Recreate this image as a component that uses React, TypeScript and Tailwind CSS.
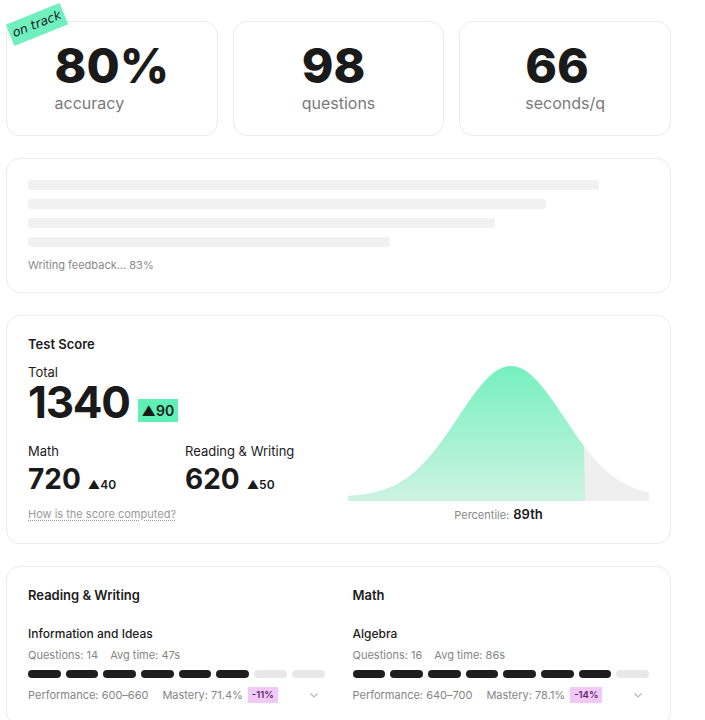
import React from "react";

const font = { fontFamily: "Inter, 'Noto Sans', sans-serif" };

function Stat({ value, label, sticker }: { value: string; label: string; sticker?: boolean }) {
  return (
    <div className="relative flex h-[115px] items-center justify-center rounded-[14px] border border-[#ebebeb] bg-white">
      {sticker && (
        <div className="absolute left-[1px] top-[-9px] flex h-[23px] w-[58px] -rotate-[22deg] items-center justify-center bg-[#6ff0be]">
          <span className="text-[12.5px] italic leading-none text-[#1a1a1a]" style={{ fontFamily: "'DejaVu Sans', sans-serif" }}>
            on track
          </span>
        </div>
      )}
      <div className="mt-[-2px] flex flex-col items-start">
        <div className="text-[48px] font-extrabold leading-[48px] text-[#1a1a1a]">{value}</div>
        <div className="mt-[3px] text-[16px] leading-[20px] text-[#7a7a7a]">{label}</div>
      </div>
    </div>
  );
}

function Bell() {
  const W = 301;
  const H = 135;
  const cx = 163;
  const s2 = 2 * 2822;
  const y = (x: number) => H - (131 * Math.exp(-((x - cx) * (x - cx)) / s2) + 4);
  const cut = 236;
  let green = `M0 ${H}`;
  for (let x = 0; x <= cut; x += 2) green += ` L${x} ${y(x).toFixed(2)}`;
  green += ` L${cut + 1} ${H} Z`;
  let gray = `M${cut} ${H} L${cut} ${y(cut).toFixed(2)}`;
  for (let x = cut; x <= W; x += 2) gray += ` L${x} ${y(x).toFixed(2)}`;
  gray += ` L${W} ${y(W).toFixed(2)} L${W} ${H} Z`;
  return (
    <svg width={W} height={H} viewBox={`0 0 ${W} ${H}`} className="block">
      <defs>
        <linearGradient id="g" x1="0" y1="0" x2="0" y2="1">
          <stop offset="0" stopColor="#76f0bf" />
          <stop offset="1" stopColor="#cdf3e2" />
        </linearGradient>
      </defs>
      <path d={gray} fill="#efefef" />
      <path d={green} fill="url(#g)" />
    </svg>
  );
}

function Bars({ filled }: { filled: number }) {
  return (
    <div className="mt-[8px] flex gap-[5px]">
      {Array.from({ length: 8 }).map((_, i) => (
        <div key={i} className={`h-[8px] flex-1 rounded-full ${i < filled ? "bg-[#1e1e1e]" : "bg-[#e8e8e8]"}`} />
      ))}
    </div>
  );
}

function Chevron() {
  return (
    <svg width="10" height="10" viewBox="0 0 10 10" className="ml-auto mr-[6px]">
      <path d="M1.5 3.5 L5 7 L8.5 3.5" fill="none" stroke="#b5b5b5" strokeWidth="1.1" />
    </svg>
  );
}

function Section({
  title,
  sub,
  q,
  t,
  filled,
  perf,
  mastery,
  delta,
}: {
  title: string;
  sub: string;
  q: string;
  t: string;
  filled: number;
  perf: string;
  mastery: string;
  delta: string;
}) {
  return (
    <div className="flex flex-col">
      <div className="text-[13px] font-semibold leading-[16px] text-[#1c1c1c]">{title}</div>
      <div className="mt-[23px] text-[12px] font-medium leading-[16px] text-[#1c1c1c]">{sub}</div>
      <div className="mt-[6px] flex gap-[12px] text-[11px] leading-[14px] text-[#858585]">
        <span>Questions: {q}</span>
        <span>Avg time: {t}</span>
      </div>
      <Bars filled={filled} />
      <div className="mt-[9px] flex items-center text-[11px] leading-[16px] text-[#858585]">
        <span>Performance: {perf}</span>
        <span className="ml-[14px]">Mastery: {mastery}</span>
        <span className="ml-[5px] bg-[#f2c8f8] px-[4px] text-[9.5px] font-semibold leading-[16px] text-[#5a2a66]">{delta}</span>
        <Chevron />
      </div>
    </div>
  );
}

export default function App() {
  return (
    <div className="min-h-[720px] bg-white" style={font}>
      <div className="ml-[6px] flex w-[665px] flex-col gap-[22px] pt-[21px] pb-[40px]">
        <div className="grid grid-cols-3 gap-[15px]">
          <Stat value="80%" label="accuracy" sticker />
          <Stat value="98" label="questions" />
          <Stat value="66" label="seconds/q" />
        </div>

        <div className="rounded-[14px] border border-[#ebebeb] bg-white px-[21px] pb-[20px] pt-[21px]">
          <div className="flex flex-col gap-[9px]">
            <div className="h-[10px] w-[92%] rounded-[3px] bg-[#f1f1f1]" />
            <div className="h-[10px] w-[83.4%] rounded-[3px] bg-[#f1f1f1]" />
            <div className="h-[10px] w-[75.2%] rounded-[3px] bg-[#f1f1f1]" />
            <div className="h-[10px] w-[58.3%] rounded-[3px] bg-[#f1f1f1]" />
          </div>
          <div className="mt-[11px] text-[11px] leading-[14px] text-[#8a8a8a]">Writing feedback... 83%</div>
        </div>

        <div className="flex rounded-[14px] border border-[#ebebeb] bg-white px-[21px] pb-[21px] pt-[20px]">
          <div className="flex flex-1 flex-col">
            <div className="text-[13px] font-semibold leading-[16px] text-[#1c1c1c]">Test Score</div>
            <div className="mt-[12px] text-[13px] leading-[16px] text-[#1c1c1c]">Total</div>
            <div className="flex items-end gap-[8px]">
              <div className="text-[44px] font-bold leading-[44px] tracking-[-0.03em] text-[#1a1a1a]">1340</div>
              <div className="mb-[2px] flex h-[23px] items-center bg-[#5ef0b5] px-[4px] text-[14px] font-semibold text-[#1a1a1a]">▲90</div>
            </div>
            <div className="mt-[19px] flex">
              <div className="flex w-[157px] flex-col">
                <div className="text-[13px] leading-[16px] text-[#1c1c1c]">Math</div>
                <div className="mt-[5px] flex items-baseline gap-[7px]">
                  <span className="text-[28px] font-bold leading-[30px] text-[#1a1a1a]">720</span>
                  <span className="text-[12px] font-semibold text-[#1a1a1a]">▲40</span>
                </div>
              </div>
              <div className="flex flex-col">
                <div className="text-[13px] leading-[16px] text-[#1c1c1c]">Reading &amp; Writing</div>
                <div className="mt-[5px] flex items-baseline gap-[7px]">
                  <span className="text-[28px] font-bold leading-[30px] text-[#1a1a1a]">620</span>
                  <span className="text-[12px] font-semibold text-[#1a1a1a]">▲50</span>
                </div>
              </div>
            </div>
            <div className="mt-[13px] w-fit text-[11px] leading-[14px] text-[#9a9a9a] underline decoration-dotted underline-offset-2">
              How is the score computed?
            </div>
          </div>
          <div className="flex flex-col items-center pt-[30px]">
            <Bell />
            <div className="mt-[5px] flex h-[16px] items-baseline gap-[4px] leading-[16px]">
              <span className="text-[11px] text-[#8a8a8a]">Percentile:</span>
              <span className="text-[13px] font-semibold text-[#1a1a1a]">89th</span>
            </div>
          </div>
        </div>

        <div className="grid grid-cols-2 gap-[28px] rounded-[14px] border border-[#ebebeb] bg-white px-[21px] pb-[22px] pt-[20px]">
          <Section
            title="Reading & Writing"
            sub="Information and Ideas"
            q="14"
            t="47s"
            filled={6}
            perf="600–660"
            mastery="71.4%"
            delta="-11%"
          />
          <Section
            title="Math"
            sub="Algebra"
            q="16"
            t="86s"
            filled={7}
            perf="640–700"
            mastery="78.1%"
            delta="-14%"
          />
        </div>
      </div>
    </div>
  );
}
